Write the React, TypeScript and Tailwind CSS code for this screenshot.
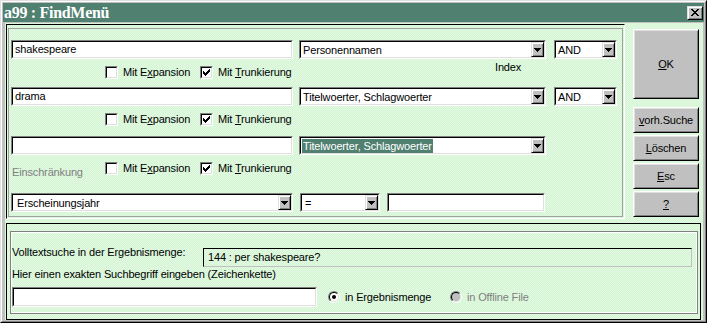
import React from 'react';

type Kids = { children?: React.ReactNode };

// sunken text field, Win95 style
function Field({ className = '', fill = 'bg-white', children }: Kids & { className?: string; fill?: string }) {
  return (
    <div className={`border border-t-[#808080] border-l-[#808080] border-r-white border-b-white ${className}`}>
      <div className={`h-full w-full border border-t-black border-l-black border-r-[#dfdfdf] border-b-[#dfdfdf] ${fill}`}>
        {children}
      </div>
    </div>
  );
}

function DropBtn() {
  return (
    <div className="flex h-full w-[13px] shrink-0 items-center justify-center border border-t-[#dfdfdf] border-l-[#dfdfdf] border-r-black border-b-black bg-[#c0c0c0] shadow-[inset_1px_1px_0_#fff,inset_-1px_-1px_0_#808080]">
      <svg width="7" height="4" viewBox="0 0 7 4" shapeRendering="crispEdges">
        <rect x="0" y="0" width="7" height="1" />
        <rect x="1" y="1" width="5" height="1" />
        <rect x="2" y="2" width="3" height="1" />
        <rect x="3" y="3" width="1" height="1" />
      </svg>
    </div>
  );
}

function Combo({ className = '', text, selected = false, pad = 'pl-[1px]' }: { className?: string; text: string; selected?: boolean; pad?: string }) {
  return (
    <Field className={`h-[19px] ${className}`}>
      <div className="flex h-full">
        <div className={`flex flex-1 items-center overflow-hidden ${pad}`}>
          <span className={`whitespace-nowrap px-[1px] leading-[14px] ${selected ? 'bg-[#508070] text-white' : ''}`}>{text}</span>
        </div>
        <DropBtn />
      </div>
    </Field>
  );
}

function Check({ checked = false, label }: { checked?: boolean; label: React.ReactNode }) {
  const cols = [2, 3, 4, 3, 2, 1, 0];
  return (
    <div className="flex items-center gap-[5px]">
      <div className="h-[13px] w-[13px] shrink-0 border border-t-[#808080] border-l-[#808080] border-r-white border-b-white">
        <div className="flex h-full w-full items-center justify-center border border-t-black border-l-black border-r-[#dfdfdf] border-b-[#dfdfdf] bg-white">
          {checked && (
            <svg width="7" height="7" viewBox="0 0 7 7" shapeRendering="crispEdges">
              {cols.map((y, x) => (
                <rect key={x} x={x} y={y} width="1" height="3" />
              ))}
            </svg>
          )}
        </div>
      </div>
      <span className="whitespace-nowrap leading-[13px]">{label}</span>
    </div>
  );
}

function Radio({ checked = false, disabled = false, label }: { checked?: boolean; disabled?: boolean; label: string }) {
  return (
    <div className="flex items-center gap-[5px]">
      <div className="h-[12px] w-[12px] shrink-0 rounded-full border border-t-[#808080] border-l-[#808080] border-r-white border-b-white">
        <div
          className={`flex h-full w-full items-center justify-center rounded-full border border-t-black border-l-black border-r-[#dfdfdf] border-b-[#dfdfdf] ${
            disabled ? 'bg-[#c0c0c0]' : 'bg-white'
          }`}
        >
          {checked && <div className="h-[4px] w-[4px] rounded-full bg-black" />}
        </div>
      </div>
      <span className={`whitespace-nowrap leading-[13px] ${disabled ? 'text-[#808080]' : ''}`}>{label}</span>
    </div>
  );
}

function Btn({ className = '', children }: Kids & { className?: string }) {
  return (
    <div
      className={`flex items-center justify-center border border-t-white border-l-white border-r-black border-b-black bg-[#c0c0c0] shadow-[inset_1px_1px_0_#dfdfdf,inset_-1px_-1px_0_#808080] ${className}`}
    >
      {children}
    </div>
  );
}

function CheckRow({ offset = 'ml-[96px]' }: { offset?: string }) {
  return (
    <>
      <div className={`${offset} mt-[7px] w-[95px]`}>
        <Check label={<>Mit E<u>x</u>pansion</>} />
      </div>
      <div className="mt-[7px] w-[295px]">
        <Check checked label={<>Mit <u>T</u>runkierung</>} />
      </div>
    </>
  );
}

const closeX = [
  [0, 0], [1, 0], [6, 0], [7, 0],
  [1, 1], [2, 1], [5, 1], [6, 1],
  [2, 2], [3, 2], [4, 2], [5, 2],
  [3, 3], [4, 3],
  [2, 4], [3, 4], [4, 4], [5, 4],
  [1, 5], [2, 5], [5, 5], [6, 5],
  [0, 6], [1, 6], [6, 6], [7, 6],
];

export default function App() {
  return (
    <div className="h-[323px] w-[707px] border border-t-[#dfdfdf] border-l-[#dfdfdf] border-r-black border-b-black bg-[#c0c0c0] font-['Liberation_Sans',Arial,sans-serif] text-[11px] tracking-[-0.15px] text-black">
      <div className="flex h-full w-full flex-col border border-t-white border-l-white border-r-[#808080] border-b-[#808080] p-[1px]">
        {/* title bar */}
        <div className="flex h-[19px] shrink-0 items-center justify-between bg-[#508070] pl-[1px] pr-[1px]">
          <span className="font-['Liberation_Serif','Times_New_Roman',serif] text-[16px] font-bold leading-[19px] tracking-[-0.3px] text-white">
            a99 : FindMenü
          </span>
          <div className="flex h-[14px] w-[16px] items-center justify-center border border-t-[#dfdfdf] border-l-[#dfdfdf] border-r-black border-b-black bg-[#c0c0c0] shadow-[inset_1px_1px_0_#fff,inset_-1px_-1px_0_#808080]">
            <svg width="8" height="7" viewBox="0 0 8 7" shapeRendering="crispEdges">
              {closeX.map(([x, y], i) => (
                <rect key={i} x={x} y={y} width="1" height="1" />
              ))}
            </svg>
          </div>
        </div>

        {/* client area, dithered mint */}
        <div className="ml-[2px] mr-[1px] mt-[1px] flex flex-1 flex-col bg-[#daf7da] bg-[image:repeating-conic-gradient(#d4f4d4_0%_25%,#e2fae2_0%_50%)] bg-size-[2px_2px]">
          <div className="mt-[1px] flex h-[195px] shrink-0">
            {/* search panel */}
            <div className="ml-[1px] w-[619px] border border-t-black border-l-black border-r-white border-b-white px-[1px] pb-[1px] pt-[3px]">
              <div className="flex h-full flex-col border border-[#a0a0a0]">
                <div className="mt-[11px] flex h-[19px] pl-[2px]">
                  <Field className="h-[19px] w-[282px]">
                    <div className="flex h-full items-center pl-[2px] leading-[13px]">shakespeare</div>
                  </Field>
                  <Combo className="ml-[6px] w-[247px]" text="Personennamen" />
                  <Combo className="ml-[8px] w-[63px]" text="AND" />
                </div>
                <div className="flex h-[28px]">
                  <CheckRow />
                  <div className="mt-[2px] leading-[13px]">Index</div>
                </div>

                <div className="flex h-[19px] pl-[2px]">
                  <Field className="h-[19px] w-[282px]">
                    <div className="flex h-full items-center pl-[2px] leading-[13px]">drama</div>
                  </Field>
                  <Combo className="ml-[6px] w-[247px]" text="Titelwoerter, Schlagwoerter" />
                  <Combo className="ml-[8px] w-[63px]" text="AND" />
                </div>
                <div className="flex h-[30px]">
                  <CheckRow />
                </div>

                <div className="flex h-[19px] pl-[2px]">
                  <Field className="h-[19px] w-[282px]" />
                  <Combo className="ml-[6px] w-[247px]" text="Titelwoerter, Schlagwoerter" selected />
                </div>
                <div className="flex h-[38px] pl-[3px]">
                  <div className="mt-[11px] w-[93px] leading-[13px] text-[#808080]">Einschränkung</div>
                  <CheckRow offset="ml-0" />
                </div>

                <div className="flex h-[19px] pl-[2px]">
                  <Combo className="w-[282px]" text="Erscheinungsjahr" pad="pl-[3px]" />
                  <Combo className="ml-[7px] w-[80px]" text="=" pad="pl-[2px]" />
                  <Field className="ml-[7px] h-[19px] w-[158px]" />
                </div>
              </div>
            </div>

            {/* buttons */}
            <div className="ml-[8px] mt-[5px] flex w-[66px] flex-col">
              <Btn className="h-[70px]">
                <span><u>O</u>K</span>
              </Btn>
              <Btn className="mt-[8px] h-[26px]">
                <span><u>v</u>orh.Suche</span>
              </Btn>
              <Btn className="mt-[2px] h-[26px]">
                <span><u>L</u>öschen</span>
              </Btn>
              <Btn className="mt-[2px] h-[26px]">
                <span><u>E</u>sc</span>
              </Btn>
              <Btn className="mt-[2px] h-[26px]">
                <span><u>?</u></span>
              </Btn>
            </div>
          </div>

          {/* full text panel */}
          <div className="ml-[1px] mr-[2px] mt-[4px] flex-1 border border-black pb-[5px] pl-[3px] pr-[2px] pt-[7px]">
            <div className="h-full border border-[#808080]">
              <div className="flex h-full flex-col border border-white">
                <div className="mt-[13px] flex items-start">
                  <div className="w-[191px] leading-[13px]">Volltextsuche in der Ergebnismenge:</div>
                  <div className="mt-[2px] flex h-[19px] w-[489px] items-center border border-t-black border-l-black border-r-[#c0c0c0] border-b-[#c0c0c0] pl-[4px]">
                    144 : per shakespeare?
                  </div>
                </div>
                <div className="mt-[1px] leading-[13px]">Hier einen exakten Suchbegriff eingeben (Zeichenkette)</div>
                <div className="mt-[6px] flex items-center">
                  <Field className="h-[20px] w-[305px]" />
                  <div className="ml-[11px] w-[122px]">
                    <Radio checked label="in Ergebnismenge" />
                  </div>
                  <Radio disabled label="in Offline File" />
                </div>
              </div>
            </div>
          </div>
        </div>
      </div>
    </div>
  );
}
